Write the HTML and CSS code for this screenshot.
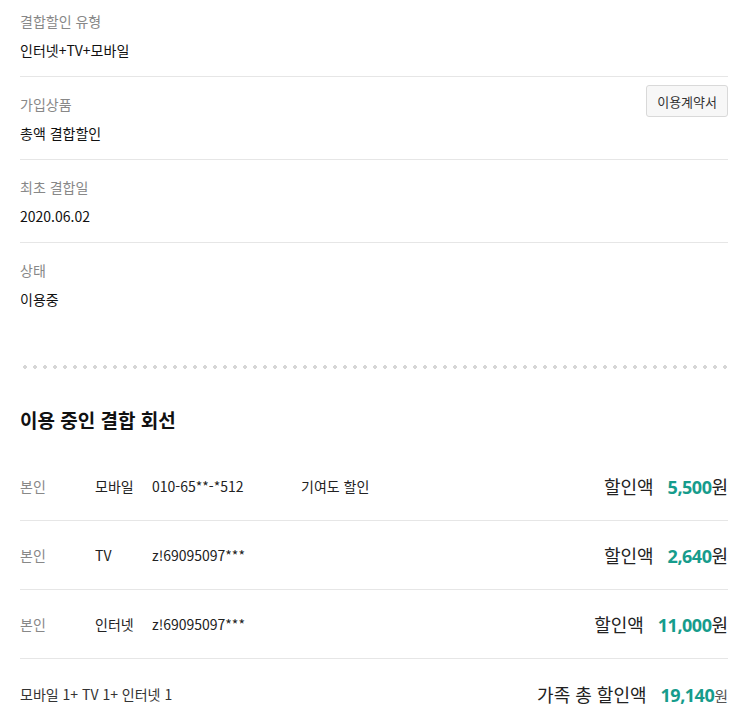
FILE: index.html
```html
<!DOCTYPE html>
<html lang="ko">
<head>
<meta charset="utf-8">
<link rel="stylesheet" href="styles.css">
</head>
<body>
<div class="page">
  <section class="info">
    <div class="item first">
      <div class="texts">
        <div class="label">결합할인 유형</div>
        <div class="value">인터넷+TV+모바일</div>
      </div>
    </div>
    <div class="item">
      <div class="texts">
        <div class="label">가입상품</div>
        <div class="value">총액 결합할인</div>
      </div>
      <button class="btn">이용계약서</button>
    </div>
    <div class="item">
      <div class="texts">
        <div class="label">최초 결합일</div>
        <div class="value">2020.06.02</div>
      </div>
    </div>
    <div class="item last">
      <div class="texts">
        <div class="label">상태</div>
        <div class="value">이용중</div>
      </div>
    </div>
  </section>
  <div class="dots"></div>
  <h2 class="title">이용 중인 결합 회선</h2>
  <div class="lines">
    <div class="row">
      <span class="who">본인</span>
      <span class="type">모바일</span>
      <span class="num">010-65**-*512</span>
      <span class="note">기여도 할인</span>
      <span class="amount"><span class="amt-label">할인액</span><b>5,500</b><span class="won">원</span></span>
    </div>
    <div class="row">
      <span class="who">본인</span>
      <span class="type">TV</span>
      <span class="num">z!69095097***</span>
      <span class="note"></span>
      <span class="amount"><span class="amt-label">할인액</span><b>2,640</b><span class="won">원</span></span>
    </div>
    <div class="row">
      <span class="who">본인</span>
      <span class="type">인터넷</span>
      <span class="num">z!69095097***</span>
      <span class="note"></span>
      <span class="amount"><span class="amt-label">할인액</span><b>11,000</b><span class="won">원</span></span>
    </div>
    <div class="row total">
      <span class="summary">모바일 1+ TV 1+ 인터넷 1</span>
      <span class="amount"><span class="amt-label">가족 총 할인액</span><b>19,140</b><span class="won small">원</span></span>
    </div>
  </div>
</div>
</body>
</html>
```
FILE: styles.css
```css
* { box-sizing: border-box; }
html, body { margin: 0; padding: 0; background: #fff; }
body {
  font-family: "Noto Sans CJK KR", "Noto Sans", sans-serif;
  color: #222;
  width: 750px;
  height: 727px;
  overflow: hidden;
}
.page { padding: 0 22px 0 20px; }
.item {
  display: flex;
  justify-content: space-between;
  align-items: flex-start;
  padding: 17px 0 16px;
  border-bottom: 1px solid #e6e6e6;
}
.item.first { padding-top: 11px; }
.item.last { border-bottom: none; }
.label { font-size: 14px; line-height: 20px; color: #888; }
.value { font-size: 14px; line-height: 20px; color: #111; margin-top: 9px; }
.btn {
  font-family: inherit;
  font-size: 13px;
  color: #333;
  background: #f7f7f7;
  border: 1px solid #d9d9d9;
  border-radius: 3px;
  height: 32px;
  padding: 0 10px;
  margin-top: -9px;
  cursor: pointer;
}
.dots {
  margin-top: 40px;
  height: 4px;
  background-image: radial-gradient(circle, #d6d6d6 1.7px, transparent 2px);
  background-size: 10px 4px;
  background-position: 0 0;
  background-repeat: repeat-x;
}
.title {
  margin: 38px 0 0;
  font-size: 19px;
  line-height: 26px;
  font-weight: 700;
  color: #111;
}
.lines { margin-top: 19px; }
.row {
  display: flex;
  align-items: center;
  height: 69px;
  border-bottom: 1px solid #e6e6e6;
  font-size: 14px;
  color: #222;
}
.row.total { border-bottom: none; justify-content: space-between; }
.who { width: 75px; color: #888; }
.type { width: 57px; }
.num { width: 149px; }
.note { flex: 1; }
.amount { display: flex; align-items: baseline; font-size: 18px; color: #222; }
.amt-label { margin-right: 14px; }
.amount b {
  font-family: "Noto Sans", "Noto Sans CJK KR", sans-serif;
  color: #169c8c;
  font-weight: 700;
  letter-spacing: -0.5px;
}
.won { color: #222; }
.won.small { font-size: 15px; color: #555; }
.summary { font-size: 14px; color: #333; }
```
